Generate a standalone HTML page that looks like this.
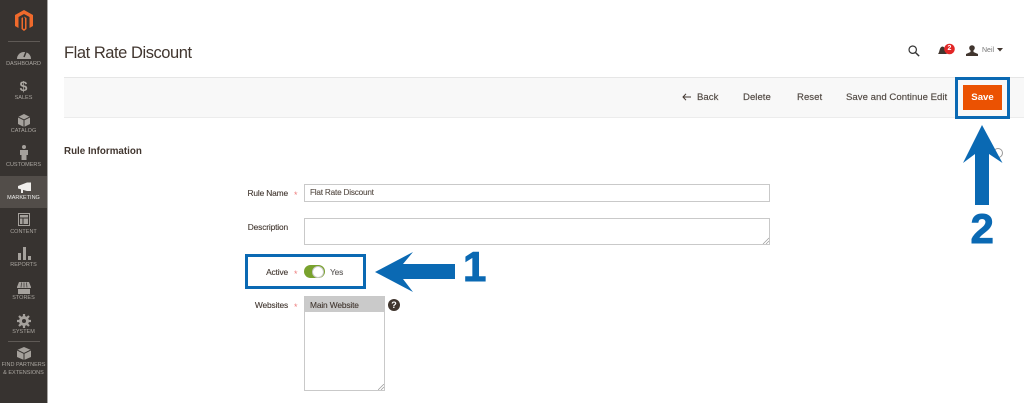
<!DOCTYPE html>
<html><head><meta charset="utf-8"><style>
html,body{margin:0;padding:0;background:#fff}
#p{position:relative;width:1024px;height:403px;overflow:hidden;background:#fff;font-family:"Liberation Sans",sans-serif;color:#41362f}
#p div,#p svg,#p span.a{position:absolute}
.n{left:0;width:47px;text-align:center;font-size:5.5px;line-height:8px;color:#aaa6a0;white-space:nowrap}
.t{font-size:9.6px;line-height:12px;white-space:nowrap;letter-spacing:.02px;color:#514943;-webkit-text-stroke:.15px #514943}
.l{font-size:8.4px;line-height:12px;white-space:nowrap;text-align:right;color:#41362f;letter-spacing:-.15px;-webkit-text-stroke:.1px #41362f}
.s{font-size:9px;line-height:10px;color:#e22626;opacity:.6}
.i{background:#fff;border:1px solid #c9c9c9;box-sizing:border-box}
.b{font-size:42px;line-height:54px;font-weight:bold;color:#0a69b3;-webkit-text-stroke:.9px #0a69b3}
</style></head><body><div id="p">
<div style="left:0;top:0;width:47px;height:403px;background:#373330"></div>
<div style="left:47px;top:0;width:1px;height:403px;background:#a8a6a4"></div>
<div style="left:0;top:176px;width:47px;height:32px;background:#524d49"></div>
<svg style="left:14px;top:9px" width="20" height="23" viewBox="0 0 20 23"><path d="M10 1L19 6V17L15.5 19V8L10 5L4.500 8V19L1 17V6Z" fill="#ef6a2c"/><path d="M10 7.500L12.500 9V20L10 22L7.500 20V9L9 8.200V19.500L10 20L11 19.500V9.500Z" fill="#ef6a2c"/></svg>
<div style="left:8px;top:41px;width:32px;height:1px;background:#5f5a56"></div>

<svg style="left:17px;top:49px" width="14" height="10" viewBox="0 0 14 10"><path d="M0 10A7 7 0 0 1 14 10Z" fill="#a5a19c"/><path d="M7 8L9 3" stroke="#373330" stroke-width="1.500"/></svg>
<div class="n" style="top:60px">DASHBOARD</div>
<div class="n" style="top:78px;font-size:14px;line-height:16px;font-weight:bold;color:#aaa6a0">$</div>
<div class="n" style="top:94px">SALES</div>
<svg style="left:18px;top:114px" width="12" height="13" viewBox="0 0 12 13"><path d="M6 0L12 3V10L6 13L0 10V3Z" fill="#a5a19c"/><path d="M0 3L6 6L12 3M6 6V13" stroke="#373330" fill="none"/></svg>
<div class="n" style="top:127px">CATALOG</div>
<svg style="left:19px;top:145px" width="10" height="15" viewBox="0 0 10 15"><circle cx="5" cy="2" r="2" fill="#a5a19c"/><path d="M1 5H9V10H7.500V15H2.500V10H1Z" fill="#a5a19c"/></svg>
<div class="n" style="top:161px">CUSTOMERS</div>
<svg style="left:18px;top:182px" width="13" height="12" viewBox="0 0 13 12"><path d="M0 4L9 0.500H13V9H9L0 6.500Z" fill="#f0eeec"/><path d="M3 7L5 7.500V11H3Z" fill="#f0eeec"/></svg>
<div class="n" style="top:194px;color:#eeeeec">MARKETING</div>
<svg style="left:18px;top:213px" width="12" height="13" viewBox="0 0 12 13"><path d="M.5.500H11.500V12.500H.5Z" fill="none" stroke="#a5a19c"/><path d="M2 2H10V4.500H2ZM2 5.500H4.500V11H2ZM5.500 5.500H10V11H5.500Z" fill="#a5a19c"/></svg>
<div class="n" style="top:228px">CONTENT</div>
<svg style="left:18px;top:247px" width="13" height="13" viewBox="0 0 13 13"><path d="M0 6H3V13H0ZM5 0H8V13H5ZM10 9H13V13H10Z" fill="#a5a19c"/></svg>
<div class="n" style="top:261px">REPORTS</div>
<svg style="left:17px;top:282px" width="14" height="12" viewBox="0 0 14 12"><path d="M2 0H12L14 5V6H0V5ZM1 7H13V12H1Z" fill="#a5a19c"/><path d="M4.500 0.500L4 5.500M7 .5V5.500M9.500 .5L10 5.500" stroke="#373330" stroke-width=".7"/></svg>
<div class="n" style="top:294px">STORES</div>
<svg style="left:17px;top:314px" width="14" height="14" viewBox="0 0 14 14"><circle cx="7" cy="7" r="3.500" fill="none" stroke="#a5a19c" stroke-width="3"/><path d="M7 0V14M0 7H14M2 2L12 12M12 2L2 12" stroke="#a5a19c" stroke-width="2.200"/><circle cx="7" cy="7" r="2" fill="#373330"/></svg>
<div class="n" style="top:328px">SYSTEM</div>
<div style="left:8px;top:341px;width:32px;height:1px;background:#5f5a56"></div>
<svg style="left:17px;top:347px" width="14" height="13" viewBox="0 0 14 13"><path d="M7 0L14 3V10L7 13L0 10V3Z" fill="#a5a19c"/><path d="M0 3L7 6.500L14 3M7 6.500V13" stroke="#373330" fill="none"/></svg>
<div class="n" style="top:361px">FIND PARTNERS</div>
<div class="n" style="top:369px">&amp; EXTENSIONS</div>

<div style="left:64px;top:43px;font-size:16.5px;line-height:20px;color:#41362f;letter-spacing:-.45px;white-space:nowrap">Flat Rate Discount</div>

<svg style="left:908px;top:45px" width="12" height="12" viewBox="0 0 14 14"><circle cx="5.500" cy="5.500" r="4.300" fill="none" stroke="#333" stroke-width="1.400"/><path d="M8.700 8.700L13 13" stroke="#333" stroke-width="1.700"/></svg>
<svg style="left:937px;top:43px" width="19" height="13" viewBox="0 0 19 13"><path d="M1 11C3 9 2 4 5.500 3.500C9 4 8 9 10 11Z" fill="#41362f"/><circle cx="12.500" cy="6" r="5.300" fill="#e22626"/></svg>
<div style="left:944px;top:44px;width:11px;text-align:center;font-size:7px;line-height:10px;font-weight:bold;color:#fff">2</div>
<svg style="left:966px;top:45px" width="12" height="11" viewBox="0 0 12 11"><circle cx="6" cy="3" r="2.800" fill="#41362f"/><path d="M4.500 5H7.500V7L12 9V11H0V9L4.500 7Z" fill="#41362f"/></svg>
<div style="left:982px;top:46px;font-size:7px;line-height:10px;color:#777;white-space:nowrap">Neil</div>
<svg style="left:997px;top:48px" width="6" height="4" viewBox="0 0 6 4"><path d="M0 0H6L3 3.500Z" fill="#41362f"/></svg>

<div style="left:64px;top:77px;width:960px;height:41px;background:#f8f8f8;border-top:1px solid #e6e6e6;border-bottom:1px solid #ececec;box-sizing:border-box"></div>
<svg style="left:682px;top:93px" width="9" height="8" viewBox="0 0 9 8"><path d="M9 4H1M4 .8L1 4L4 7.200" fill="none" stroke="#41362f" stroke-width="1"/></svg>
<div class="t" style="left:697px;top:92px">Back</div>
<div class="t" style="left:743px;top:92px">Delete</div>
<div class="t" style="left:797px;top:92px">Reset</div>
<div class="t" style="left:846px;top:92px">Save and Continue Edit</div>
<div style="left:963px;top:85px;width:39px;height:25px;background:#eb5202"></div>
<div style="left:963px;top:92px;width:39px;text-align:center;font-size:9.600px;line-height:12px;font-weight:bold;color:#fff">Save</div>
<div style="left:955px;top:77px;width:55px;height:42px;border:3.500px solid #0a69b3;box-sizing:border-box"></div>

<div style="left:64px;top:146px;font-size:9.800px;line-height:12px;font-weight:bold;color:#41362f;letter-spacing:0;white-space:nowrap">Rule Information</div>
<svg style="left:992px;top:147px" width="12" height="12" viewBox="0 0 12 12"><circle cx="6" cy="6" r="4.500" fill="none" stroke="#999"/></svg>

<div class="l" style="left:200px;width:88px;top:187px">Rule Name</div><div class="s a" style="left:294px;top:190px">*</div>
<div class="i" style="left:304px;top:184px;width:466px;height:18px"></div>
<div class="l" style="left:310px;top:187px;color:#5a5048;font-size:8.200px;letter-spacing:-.2px">Flat Rate Discount</div>

<div class="l" style="left:200px;width:88px;top:221px">Description</div>
<div class="i" style="left:304px;top:218px;width:466px;height:27px"></div>
<svg style="left:762px;top:237px" width="7" height="7" viewBox="0 0 7 7"><path d="M1 7L7 1M4 7L7 4" stroke="#999" stroke-width=".7"/></svg>

<div style="left:245px;top:254px;width:121px;height:35px;border:3.500px solid #0a69b3;box-sizing:border-box"></div>
<div class="l" style="left:200px;width:88px;top:266px">Active</div><div class="s a" style="left:294px;top:269px">*</div>
<div style="left:304px;top:265px;width:21px;height:13px;border-radius:7px;background:#79a22e"></div>
<div style="left:312px;top:265.500px;width:12px;height:12px;border-radius:50%;background:#fff;border:1px solid #c8c8c8;box-sizing:border-box"></div>
<div class="l" style="left:330px;top:266px;color:#666">Yes</div>

<div class="l" style="left:200px;width:88px;top:299px">Websites</div><div class="s a" style="left:294px;top:302px">*</div>
<div class="i" style="left:304px;top:296px;width:81px;height:95px"></div>
<div style="left:305px;top:297px;width:79px;height:15px;background:#cacaca"></div>
<div class="l" style="left:310px;top:299px">Main Website</div>
<svg style="left:378px;top:384px" width="6" height="6" viewBox="0 0 6 6"><path d="M0 6L6 0M3 6L6 3" stroke="#999" stroke-width=".7"/></svg>
<div style="left:388px;top:299px;width:12px;height:12px;border-radius:50%;background:#41362f;color:#fff;font-size:9px;line-height:12px;text-align:center;font-weight:bold">?</div>

<svg style="left:370px;top:245px" width="90" height="55" viewBox="0 0 90 55"><path d="M5 27L43 7L33 19H85V34H33L43 47Z" fill="#0a69b3"/></svg>
<div class="b" style="left:463px;top:239.500px">1</div>
<svg style="left:960px;top:122px" width="46" height="86" viewBox="0 0 46 86"><path d="M22 3L42.500 41L29 32V83H15V32L3 41Z" fill="#0a69b3"/></svg>
<div class="b" style="left:970.500px;top:201.500px">2</div>
</div></body></html>
